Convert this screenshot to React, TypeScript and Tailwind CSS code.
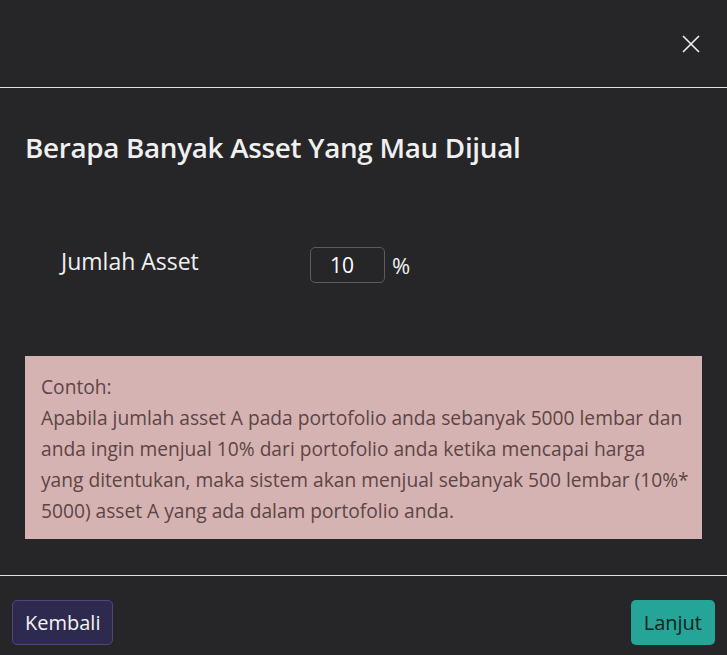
import React from 'react';

const App = () => {
  return (
    <div className="w-[727px] h-[655px] bg-[#262628] text-white flex flex-col overflow-hidden font-['Open_Sans',sans-serif]">
      {/* Header */}
      <div className="h-[88px] flex items-center justify-end pr-[27px] border-b border-[#e2e2e2] shrink-0">
        <button className="w-[18px] h-[18px] flex items-center justify-center">
          <svg width="18" height="18" viewBox="0 0 18 18" fill="none" stroke="#f2f2f2" strokeWidth="1.6">
            <path d="M1 1L17 17M17 1L1 17" />
          </svg>
        </button>
      </div>

      {/* Body */}
      <div className="flex-1 px-[25px]">
        <h1 className="mt-[41px] text-[27.8px] font-semibold leading-[36px] text-[#f0f0f0] tracking-[-0.3px]">
          Berapa Banyak Asset Yang Mau Dijual
        </h1>

        <div className="mt-[82px] flex items-center">
          <span className="w-[285px] pl-[36px] text-[23px] text-[#f0f0f0] -mt-[8px]">Jumlah Asset</span>
          <input
            defaultValue="10"
            className="w-[75px] h-[36px] rounded-[5px] border border-[#5c5c5e] bg-transparent pl-[19px] text-[21px] text-white outline-none"
          />
          <span className="ml-[7px] text-[22px] text-[#f0f0f0]">%</span>
        </div>

        <div className="mt-[73px] bg-[#d6b3b3] pl-[16px] pr-[6px] pt-[15px] pb-[13px] text-[19.2px] leading-[31px] text-[#5c4545]">
          <p>Contoh:</p>
          <p>
            Apabila jumlah asset A pada portofolio anda sebanyak 5000 lembar dan<br />
            anda ingin menjual 10% dari portofolio anda ketika mencapai harga<br />
            yang ditentukan, maka sistem akan menjual sebanyak 500 lembar (10%*<br />
            5000) asset A yang ada dalam portofolio anda.
          </p>
        </div>
      </div>

      {/* Footer */}
      <div className="h-[80px] shrink-0 border-t border-[#e2e2e2] flex items-start justify-between px-[12px] pt-[24px]">
        <button className="h-[45px] px-[12px] rounded-[5px] border border-[#4d4780] bg-[#2e2a4f] text-[20px] text-[#f4f4f4]">
          Kembali
        </button>
        <button className="h-[45px] px-[13px] rounded-[5px] bg-[#24a597] text-[20px] text-[#102220]">
          Lanjut
        </button>
      </div>
    </div>
  );
};

export default App;
